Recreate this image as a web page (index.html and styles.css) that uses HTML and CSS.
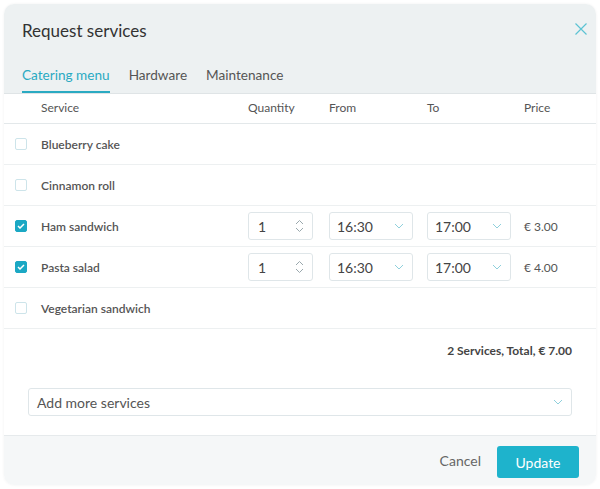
FILE: index.html
```html
<!DOCTYPE html>
<html>
<head>
<meta charset="utf-8">
<link rel="stylesheet" href="styles.css">
</head>
<body>
<div class="dialog">
  <div class="head">
    <div class="title-row">
      <h1 class="title">Request services</h1>
      <svg class="close" width="12" height="12" viewBox="0 0 12 12"><path d="M0.5 0.5L11.5 11.5M11.5 0.5L0.5 11.5" stroke="#5cc3d3" stroke-width="1.2" fill="none"/></svg>
    </div>
    <div class="tabs">
      <span class="tab active">Catering menu</span>
      <span class="tab">Hardware</span>
      <span class="tab">Maintenance</span>
    </div>
  </div>
  <div class="table">
    <div class="row thead">
      <span></span><span>Service</span><span>Quantity</span><span>From</span><span>To</span><span>Price</span>
    </div>
    <div class="row">
      <span class="cb"></span><span class="name">Blueberry cake</span>
    </div>
    <div class="row">
      <span class="cb"></span><span class="name">Cinnamon roll</span>
    </div>
    <div class="row">
      <span class="cb on"><svg width="8" height="6" viewBox="0 0 8 6"><path d="M1 3L3 5L7 1" stroke="#fff" stroke-width="1.5" fill="none"/></svg></span>
      <span class="name">Ham sandwich</span>
      <span class="field qty">1<svg class="spin" width="9" height="14" viewBox="0 0 9 14"><path d="M1 5L4.5 1.5L8 5M1 9L4.5 12.5L8 9" stroke="#9aa8ad" stroke-width="1" fill="none"/></svg></span>
      <span class="field sel">16:30<svg class="chev" width="10" height="6" viewBox="0 0 10 6"><path d="M1 1L5 5L9 1" stroke="#8fd0dc" stroke-width="1" fill="none"/></svg></span>
      <span class="field sel">17:00<svg class="chev" width="10" height="6" viewBox="0 0 10 6"><path d="M1 1L5 5L9 1" stroke="#8fd0dc" stroke-width="1" fill="none"/></svg></span>
      <span class="price">€ 3.00</span>
    </div>
    <div class="row">
      <span class="cb on"><svg width="8" height="6" viewBox="0 0 8 6"><path d="M1 3L3 5L7 1" stroke="#fff" stroke-width="1.5" fill="none"/></svg></span>
      <span class="name">Pasta salad</span>
      <span class="field qty">1<svg class="spin" width="9" height="14" viewBox="0 0 9 14"><path d="M1 5L4.5 1.5L8 5M1 9L4.5 12.5L8 9" stroke="#9aa8ad" stroke-width="1" fill="none"/></svg></span>
      <span class="field sel">16:30<svg class="chev" width="10" height="6" viewBox="0 0 10 6"><path d="M1 1L5 5L9 1" stroke="#8fd0dc" stroke-width="1" fill="none"/></svg></span>
      <span class="field sel">17:00<svg class="chev" width="10" height="6" viewBox="0 0 10 6"><path d="M1 1L5 5L9 1" stroke="#8fd0dc" stroke-width="1" fill="none"/></svg></span>
      <span class="price">€ 4.00</span>
    </div>
    <div class="row">
      <span class="cb"></span><span class="name">Vegetarian sandwich</span>
    </div>
  </div>
  <div class="total">2 Services, Total, € 7.00</div>
  <div class="add">
    <span>Add more services</span>
    <svg class="chev" width="10" height="6" viewBox="0 0 10 6"><path d="M1 1L5 5L9 1" stroke="#8fd0dc" stroke-width="1" fill="none"/></svg>
  </div>
  <div class="foot">
    <span class="cancel">Cancel</span>
    <span class="update">Update</span>
  </div>
</div>
</body>
</html>
```
FILE: styles.css
```css
* { box-sizing: border-box; }
html, body { margin: 0; padding: 0; background: #fff; }
body { font-family: Lato, "Open Sans", sans-serif; color: #444; }
.dialog {
  margin: 4px;
  width: 592px;
  height: 481px;
  border-radius: 10px;
  overflow: hidden;
  background: #fff;
  display: flex;
  flex-direction: column;
  box-shadow: 0 0 3px rgba(0,0,0,0.06);
}
.head { background: #edf1f2; padding: 0 0 0 18px; height: 89px; }
.title-row { display: flex; justify-content: space-between; align-items: center; padding-top: 16px; padding-right: 9px; }
.title { margin: 0; font-size: 17px; line-height: 22px; font-weight: 400; color: #333; }
.close { margin-top: -4px; }
.tabs { display: flex; gap: 19px; margin-top: 24px; }
.tab { font-size: 13.6px; line-height: 18px; padding-bottom: 7px; border-bottom: 2px solid transparent; color: #555; }
.tab.active { color: #2aaac2; border-bottom-color: #2aaac2; }
.table { display: flex; flex-direction: column; }
.row {
  display: grid;
  grid-template-columns: 26px 207px 81px 98px 97px 1fr;
  align-items: center;
  padding-left: 11px;
  height: 41px;
  border-top: 1px solid #edf0f1;
  font-size: 12px;
}
.row.thead { height: 30px; border-top: 1px solid #dfe4e6; color: #555; padding-bottom: 2px; }
.row.thead + .row { border-top-color: #e3e8ea; }
.cb { width: 12px; height: 12px; border: 1px solid #cde4ea; border-radius: 2px; display: flex; align-items: center; justify-content: center; }
.cb.on { background: #1ba8c4; border-color: #1ba8c4; }
.name { font-weight: 600; color: #555; }
.field {
  height: 28px;
  border: 1px solid #dfe6e9;
  border-radius: 3px;
  display: flex;
  align-items: center;
  justify-content: space-between;
  font-size: 14px;
  color: #444;
  padding: 0 8px 0 9px;
}
.qty { width: 65px; }
.sel { width: 84px; padding-left: 7px; }
.price { font-size: 12px; color: #555; }
.total { border-top: 1px solid #edf0f1; text-align: right; font-size: 12px; font-weight: 700; color: #444; padding: 14px 24px 0 0; height: 60px; }
.add {
  margin: 0 24px 0 24px;
  height: 28px;
  border: 1px solid #dfe6e9;
  border-radius: 3px;
  display: flex;
  align-items: center;
  justify-content: space-between;
  padding: 0 8px 0 8px;
  font-size: 14px;
  color: #555;
}
.foot {
  margin-top: auto;
  height: 50px;
  background: #f5f7f8;
  border-top: 1px solid #e6eaec;
  display: flex;
  align-items: center;
  justify-content: flex-end;
  padding-right: 17px;
  gap: 16px;
}
.cancel { font-size: 14px; color: #666; }
.update { width: 82px; height: 32px; border-radius: 3px; background: #1eb3cc; color: #fff; font-size: 14px; display: flex; align-items: center; justify-content: center; margin-top: 3px; }
```
